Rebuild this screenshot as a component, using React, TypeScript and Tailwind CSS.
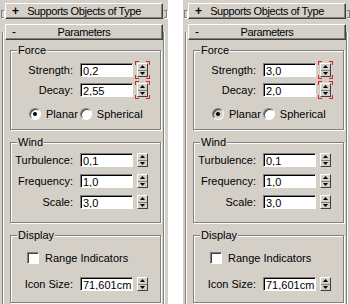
import React from 'react'

type PanelData = {
  strength: string
  decay: string
  planarPressed?: boolean
}

function Arrow({ down }: { down?: boolean }) {
  return (
    <svg width="5" height="3" viewBox="0 0 5 3" className="block">
      <path d={down ? 'M0 0H5L2.5 3z' : 'M2.5 0L5 3H0z'} fill="#000" />
    </svg>
  )
}

function Spinner({ keyed }: { keyed?: boolean }) {
  return (
    <div className="relative ml-[4px] w-[11px] h-[14px] flex flex-col border-r border-b border-[#404040] border-t border-l border-t-white border-l-white">
      <div className="flex-1 flex items-center justify-center border-b border-[#808080]">
        <Arrow />
      </div>
      <div className="flex-1 flex items-center justify-center">
        <Arrow down />
      </div>
      {keyed && (
        <>
          <span className="absolute -left-[3px] -top-[3px] w-[4px] h-[4px] border-l border-t border-[#e02020]" />
          <span className="absolute -right-[3px] -top-[3px] w-[4px] h-[4px] border-r border-t border-[#e02020]" />
          <span className="absolute -left-[3px] -bottom-[3px] w-[4px] h-[4px] border-l border-b border-[#e02020]" />
          <span className="absolute -right-[3px] -bottom-[3px] w-[4px] h-[4px] border-r border-b border-[#e02020]" />
        </>
      )}
    </div>
  )
}

function Field({ label, value, keyed, className = '' }: { label: string; value: string; keyed?: boolean; className?: string }) {
  return (
    <div className={`flex items-center h-[14px] ${className}`}>
      <div className="w-[62px] text-right leading-[14px]">{label}</div>
      <div className="ml-[7px] w-[53px] h-[14px] bg-white border border-t-[#808080] border-l-[#808080] border-r-white border-b-white shadow-[inset_1px_1px_0_#000] pl-[2px] pt-[1px] leading-[12px] whitespace-nowrap overflow-hidden">
        {value}
      </div>
      <Spinner keyed={keyed} />
    </div>
  )
}

function Group({ title, className = '', children }: { title: string; className?: string; children: React.ReactNode }) {
  return (
    <div className={`relative ml-[7px] w-[151px] border border-[#808080] shadow-[inset_1px_1px_0_#fff,1px_1px_0_#fff] ${className}`}>
      <span className="absolute -top-[8px] left-[6px] px-[1px] bg-[#d4d0c8] leading-[14px]">{title}</span>
      {children}
    </div>
  )
}

function Radio({ checked, pressed }: { checked?: boolean; pressed?: boolean }) {
  return (
    <div className={`w-[12px] h-[12px] rounded-full border border-t-[#808080] border-l-[#808080] border-r-white border-b-white shadow-[inset_1px_1px_0_#404040] flex items-center justify-center ${pressed ? 'bg-[#d4d0c8]' : 'bg-white'}`}>
      {checked && <div className="w-[4px] h-[4px] rounded-full bg-black" />}
    </div>
  )
}

function HeaderButton({ sign, title }: { sign: string; title: string }) {
  return (
    <div className="w-[158px] h-[16px] flex items-center bg-[#d4d0c8] border border-t-white border-l-white border-r-[#404040] border-b-[#404040] shadow-[inset_-1px_-1px_0_#808080]">
      <span className={`w-[18px] shrink-0 pl-[6px] leading-[14px] text-[12px] ${sign === '+' ? 'font-bold' : ''}`}>{sign}</span>
      <span className="flex-1 min-w-0 text-center leading-[14px] tracking-[-0.4px] whitespace-nowrap">{title}</span>
      <span className="w-[18px] shrink-0" />
    </div>
  )
}

function Panel({ data, width }: { data: PanelData; width: string }) {
  return (
    <div className={`${width} h-[304px] bg-[#d4d0c8] pt-[3px] flex flex-col overflow-hidden`}>
      {/* collapsed rollout */}
      <div className="flex items-start">
        <div className="ml-[1px] mt-[7px] w-[3px] h-[8px] border-l border-t border-b border-[#808080] shadow-[1px_1px_0_#fff]" />
        <div className="ml-[1px]">
          <HeaderButton sign="+" title="Supports Objects of Type" />
        </div>
        <div className="ml-[1px] mt-[7px] w-[3px] h-[8px] border-r border-t border-b border-[#808080] shadow-[1px_1px_0_#fff]" />
      </div>

      {/* Parameters rollout */}
      <div className="ml-[2px] mt-[13px] w-[162px] flex-1 border-l border-r border-[#808080] shadow-[inset_1px_0_0_#fff,1px_0_0_#fff]">
        <div className="-mt-[8px] ml-[2px]">
          <HeaderButton sign="-" title="Parameters" />
        </div>

        <Group title="Force" className="mt-[10px] h-[80px] pt-[12px]">
          <Field label="Strength:" value={data.strength} keyed />
          <Field label="Decay:" value={data.decay} keyed className="mt-[6px]" />
          <div className="mt-[11px] h-[12px] flex items-center pl-[18px]">
            <Radio checked pressed={data.planarPressed} />
            <span className="ml-[5px] leading-[12px]">Planar</span>
            <div className="ml-[2px]">
              <Radio />
            </div>
            <span className="ml-[5px] leading-[12px]">Spherical</span>
          </div>
        </Group>

        <Group title="Wind" className="mt-[12px] h-[81px] pt-[10px]">
          <Field label="Turbulence:" value="0,1" />
          <Field label="Frequency:" value="1,0" className="mt-[7px]" />
          <Field label="Scale:" value="3,0" className="mt-[7px]" />
        </Group>

        <Group title="Display" className="mt-[12px] h-[68px] pt-[16px]">
          <div className="flex items-center h-[12px] pl-[16px]">
            <div className="w-[12px] h-[12px] bg-white border border-t-[#808080] border-l-[#808080] border-r-white border-b-white shadow-[inset_1px_1px_0_#404040]" />
            <span className="ml-[6px] leading-[12px]">Range Indicators</span>
          </div>
          <Field label="Icon Size:" value="71,601cm" className="mt-[13px]" />
        </Group>
      </div>
    </div>
  )
}

export default function App() {
  return (
    <div className="w-[350px] h-[304px] bg-white flex font-['Liberation_Sans',Arial,sans-serif] text-[11px] text-black overflow-hidden">
      <Panel data={{ strength: '0,2', decay: '2,55' }} width="w-[168px]" />
      <div className="w-[15px] shrink-0" />
      <Panel data={{ strength: '3,0', decay: '2,0', planarPressed: true }} width="w-[167px]" />
    </div>
  )
}
